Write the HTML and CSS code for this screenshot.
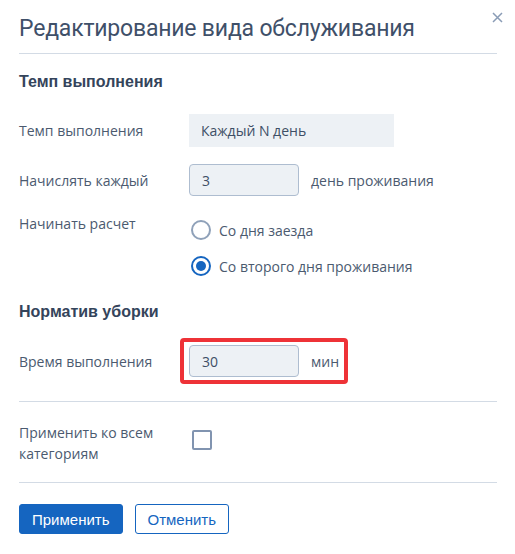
FILE: index.html
```html
<!DOCTYPE html>
<html lang="ru">
<head>
    <meta charset="UTF-8">
    <meta name="viewport" content="width=device-width, initial-scale=1.0">
    <title>Редактирование вида обслуживания</title>
    <link rel="stylesheet" href="styles.css">
</head>
<body>

    <div class="dialog">
        <div class="dialog-header">
            <h1>Редактирование вида обслуживания</h1>
            <button class="close-button" title="Закрыть">
                <svg width="11" height="11" viewBox="0 0 11 11">
                    <path d="M1 1 L10 10 M10 1 L1 10" stroke="#8a9cb6" stroke-width="1.5" fill="none"/>
                </svg>
            </button>
        </div>

        <h2 class="section-title first">Темп выполнения</h2>

        <div class="row row-pace">
            <div class="label">Темп выполнения</div>
            <div class="static-field">Каждый N день</div>
        </div>

        <div class="row row-every">
            <div class="label">Начислять каждый</div>
            <input class="text-input" type="text" value="3">
            <span class="unit">день проживания</span>
        </div>

        <div class="row row-start">
            <div class="label">Начинать расчет</div>
            <div class="radio-group">
                <label class="radio"><span class="radio-mark"></span>Со дня заезда</label>
                <label class="radio checked"><span class="radio-mark"></span>Со второго дня проживания</label>
            </div>
        </div>

        <h2 class="section-title">Норматив уборки</h2>

        <div class="row row-time">
            <div class="label">Время выполнения</div>
            <div class="highlight">
                <input class="text-input" type="text" value="30">
                <span class="unit">мин</span>
            </div>
        </div>

        <div class="row row-all">
            <div class="label">Применить ко всем категориям</div>
            <span class="checkbox"></span>
        </div>

        <div class="actions">
            <button class="btn btn-primary">Применить</button>
            <button class="btn btn-secondary">Отменить</button>
        </div>
    </div>

</body>
</html>
```

FILE: styles.css
```css
body {
    margin: 0;
    background: #fff;
    font-family: "Open Sans", "Noto Sans", sans-serif;
    font-size: 14px;
    color: #4b5a6f;
}

.dialog {
    width: 478px;
    padding: 0 18px 0 19px;
}

.dialog-header {
    display: flex;
    justify-content: space-between;
    height: 53px;
    border-bottom: 1px solid #d3dbe5;
}

.dialog-header h1 {
    margin: 0;
    padding-top: 12px;
    font-family: Roboto, "Open Sans", sans-serif;
    font-size: 23px;
    font-weight: 400;
    line-height: 34px;
    letter-spacing: -0.2px;
    color: #3f5069;
}

.close-button {
    align-self: flex-start;
    margin-top: 12px;
    margin-right: -6px;
    padding: 0;
    border: none;
    background: none;
    cursor: pointer;
    line-height: 0;
}

.section-title {
    margin: 19px 0 0;
    font-family: "Liberation Sans", Arial, sans-serif;
    font-size: 16px;
    font-weight: 700;
    line-height: 18px;
    color: #34445b;
}

.row {
    display: flex;
    align-items: center;
}

.label {
    width: 170px;
    flex-shrink: 0;
    line-height: 21px;
}

.row-pace {
    margin-top: 23px;
}

.static-field {
    width: 193px;
    height: 33px;
    padding-left: 12px;
    line-height: 33px;
    background: #edf1f5;
    color: #3e4f66;
}

.row-every {
    margin-top: 17px;
}

.text-input {
    box-sizing: border-box;
    width: 110px;
    height: 32px;
    padding: 0 12px;
    border: 1px solid #aebdd0;
    border-radius: 4px;
    background: #edf1f5;
    font-family: inherit;
    font-size: 14px;
    color: #3e4f66;
    outline: none;
}

.unit {
    margin-left: 12px;
}

.row-start {
    align-items: flex-start;
    margin-top: 16px;
}

.row-start .label {
    margin-top: 1px;
}

.radio-group {
    display: flex;
    flex-direction: column;
}

.radio {
    display: flex;
    align-items: center;
    height: 36px;
    margin-left: 2px;
}

.radio-mark {
    box-sizing: border-box;
    width: 20px;
    height: 20px;
    margin-right: 8px;
    border: 2px solid #8fa1b9;
    border-radius: 50%;
    position: relative;
}

.radio.checked .radio-mark {
    border-color: #1565c0;
}

.radio.checked .radio-mark::after {
    content: "";
    position: absolute;
    left: 3px;
    top: 3px;
    width: 10px;
    height: 10px;
    border-radius: 50%;
    background: #1565c0;
}

.row-time {
    margin-top: 17px;
}

.highlight {
    display: flex;
    align-items: center;
    margin-left: -9px;
    padding: 3px 5px 3px 5px;
    border: 4px solid #ee3237;
    border-radius: 4px;
}

.row-all {
    align-items: flex-start;
    margin-top: 17px;
    padding: 1px 0 18px;
    border-top: 1px solid #d3dbe5;
    border-bottom: 1px solid #d3dbe5;
}

.row-all .label {
    width: 150px;
    margin-top: 19px;
    margin-right: 22px;
}

.checkbox {
    box-sizing: border-box;
    width: 20px;
    height: 20px;
    margin-top: 27px;
    margin-left: 1px;
    border: 2px solid #8194b0;
    border-radius: 2px;
}

.actions {
    display: flex;
    gap: 12px;
    margin-top: 21px;
}

.btn {
    height: 30px;
    padding: 0 12px;
    border-radius: 3px;
    font-family: "Liberation Sans", Arial, sans-serif;
    font-size: 15px;
    cursor: pointer;
}

.btn-primary {
    border: 1px solid #1565c0;
    background: #1565c0;
    color: #fff;
}

.btn-secondary {
    border: 1px solid #1565c0;
    background: #fff;
    color: #1565c0;
}
```
